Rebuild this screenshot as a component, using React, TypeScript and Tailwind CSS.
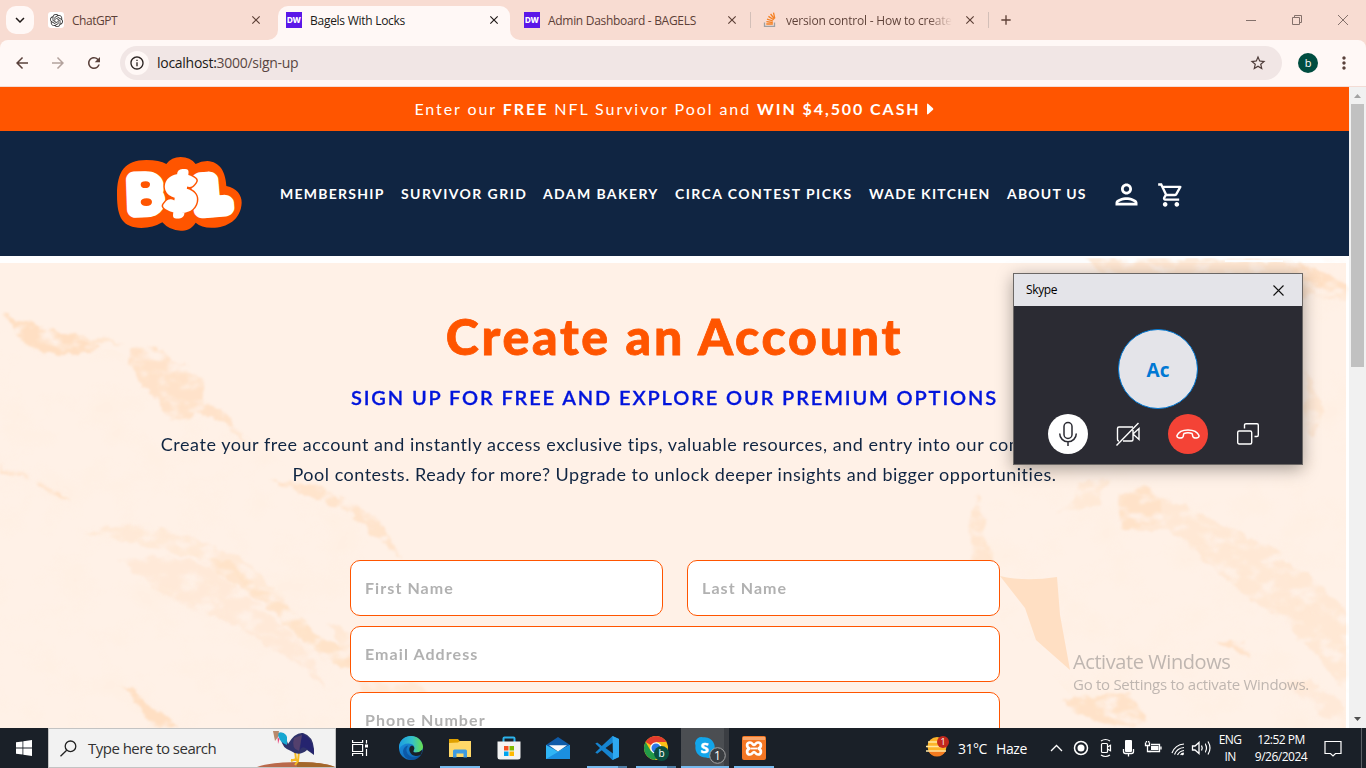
import React from "react";
import {
  MdOutlinePerson,
  MdOutlineShoppingCart,
  MdOutlineInfo,
  MdStarBorder,
  MdArrowBack,
  MdArrowForward,
  MdRefresh,
  MdMoreVert,
  MdClose,
  MdAdd,
  MdKeyboardArrowDown,
} from "react-icons/md";
import { SiOpenai } from "react-icons/si";

const UI = "font-['Open_Sans','Noto_Sans',sans-serif]";

function DwIcon() {
  return (
    <span className="flex h-4 w-4 shrink-0 items-center justify-center bg-[#5b17e8] font-['Inter',sans-serif] text-[8px] font-extrabold leading-none text-white">
      DW
    </span>
  );
}

function StackIcon() {
  return (
    <svg width="16" height="16" viewBox="0 0 16 16" className="shrink-0" fill="none">
      <path d="M2.5 10.5v3.8h10v-3.8" stroke="#9da0a3" strokeWidth="1.3" />
      <path d="M4.3 12h6.5M4.4 9.7l6.4.8M5 7.2l6 1.8M6.4 4.4l5.3 3.4M8.6 2l3.9 5M11.5.6l1.3 5.7" stroke="#f48024" strokeWidth="1.3" />
    </svg>
  );
}

function TabTitle({ children, cls }: { children: React.ReactNode; cls: string }) {
  return <span className={`ml-2 mt-px whitespace-nowrap text-[12px] leading-4 ${cls}`}>{children}</span>;
}

function TabStrip() {
  return (
    <div className={`flex h-10 shrink-0 items-start bg-[#f8dcd2] text-[#5d4037] ${UI}`}>
      <div className="ml-1.5 mt-1.5 flex h-7 w-7 items-center justify-center rounded-[10px] bg-[#fff8f6] text-[#201a18]">
        <MdKeyboardArrowDown size={18} />
      </div>
      <div className="flex h-10 w-[244px] items-center pl-[14px] pr-[15px]">
        <span className="flex h-4 w-4 items-center justify-center rounded-[3px] bg-white text-[#333]">
          <SiOpenai size={13} />
        </span>
        <TabTitle cls="tracking-[-0.450px]">ChatGPT</TabTitle>
        <MdClose size={14} className="ml-auto" />
      </div>
      <div className="relative mt-1.5 flex h-[34px] w-[232px] items-center rounded-t-[10px] bg-[#fff8f6] pb-[6px] pl-2 pr-[9px] text-[#201a18]">
        <svg className="absolute -left-[10px] bottom-0" width="10" height="10"><path d="M10 0v10H0A10 10 0 0 0 10 0" fill="#fff8f6" /></svg>
        <svg className="absolute -right-[10px] bottom-0" width="10" height="10"><path d="M0 0v10h10A10 10 0 0 1 0 0" fill="#fff8f6" /></svg>
        <DwIcon />
        <TabTitle cls="tracking-[-0.270px]">Bagels With Locks</TabTitle>
        <MdClose size={14} className="ml-auto" />
      </div>
      <div className="flex h-10 w-[240px] items-center pl-[14px] pr-[11px]">
        <DwIcon />
        <TabTitle cls="tracking-[-0.300px]">Admin Dashboard - BAGELS</TabTitle>
        <MdClose size={14} className="ml-auto" />
      </div>
      <div className="flex h-10 w-[238px] items-center">
        <span className="mr-[11px] h-4 w-px bg-[#d3bfb8]" />
        <StackIcon />
        <TabTitle cls="w-[166px] overflow-hidden bg-linear-to-r from-[#5d4037] from-85% to-[#f8dcd2] bg-clip-text text-transparent tracking-[-0.200px]">
          version control - How to create
        </TabTitle>
        <MdClose size={14} className="ml-auto mr-[11px]" />
      </div>
      <div className="flex h-10 items-center">
        <span className="mr-[9px] h-4 w-px bg-[#d3bfb8]" />
        <MdAdd size={16} />
      </div>
      <svg className="ml-auto" width="130" height="40" viewBox="0 0 130 40" fill="none" stroke="#84716b" strokeWidth="1">
        <path d="M10 20.500h10M56.500 17.500h7v7h-7zM58.500 17v-1.500h7v7h-2M102 15l10 10M112 15l-10 10" />
      </svg>
    </div>
  );
}

function Toolbar() {
  return (
    <div className="shrink-0 bg-[#f8dcd2]">
      <div className={`flex h-[46px] items-center rounded-t-[8px] bg-[#fff8f6] text-[#5a413b] ${UI}`}>
        <MdArrowBack size={18} className="ml-[13px]" />
        <MdArrowForward size={18} className="ml-[18px] text-[#b3a29d]" />
        <MdRefresh size={18} className="ml-[18px]" />
        <div className="ml-[17px] flex h-[34px] w-[1162px] items-center rounded-full bg-[#f1e6e5] pl-[5px]">
          <span className="flex h-6 w-6 items-center justify-center rounded-full bg-[#fff8f6] text-[#2b2321]">
            <MdOutlineInfo size={16} />
          </span>
          <span className="-mt-px ml-[8px] text-[14px] tracking-[-0.280px] text-[#5a4642]">
            <span className="text-[#201a18]">localhost:</span>3000/sign-up
          </span>
          <MdStarBorder size={18} className="ml-auto mr-[15px] text-[#4d3b38]" />
        </div>
        <span className="ml-4 flex h-5 w-5 items-center justify-center rounded-full bg-[#004d40] pb-px text-[11px] leading-none text-white">b</span>
        <MdMoreVert size={20} className="ml-[16px]" />
      </div>
      <div className="h-px bg-[#f3dcd5]" />
    </div>
  );
}

function Logo() {
  return (
    <svg width="126" height="75" viewBox="52 48 378 225" className="shrink-0" aria-label="B$L">
      <path
        d="M52 165C52 95 75 60 140 60Q180 60 200 72Q215 51 243 51Q272 51 288 72Q304 63 323 63C360 65 378 95 380 138C412 145 426 165 426 188C424 240 380 264 335 263Q305 263 288 248C275 268 260 272 243 272Q210 272 188 247Q160 264 125 264C70 262 52 235 52 165Z"
        fill="#ff5500"
      />
      <g fill="#fff" stroke="#fff" strokeLinejoin="round" fontFamily="Lato, sans-serif" fontWeight="900">
        <text x="96" y="207" fontSize="122" strokeWidth="50" textLength="80" lengthAdjust="spacingAndGlyphs" transform="rotate(-2 138 165)">B</text>
        <text x="298" y="207" fontSize="122" strokeWidth="50" textLength="76" lengthAdjust="spacingAndGlyphs" transform="rotate(-5 340 170)">L</text>
        <text x="197" y="210" fontSize="138" stroke="#ff5500" strokeWidth="26" textLength="90" lengthAdjust="spacingAndGlyphs">$</text>
        <text x="197" y="210" fontSize="138" strokeWidth="18" textLength="90" lengthAdjust="spacingAndGlyphs">$</text>
      </g>
      <path d="M123 134Q123 124 138 124Q152 125 151 134Q150 144 136 144Q124 144 123 134ZM123 186Q124 175 141 175Q157 176 157 186Q156 198 140 198Q124 198 123 186Z" fill="#ff5500" />
    </svg>
  );
}

const NAV: [string, string][] = [
  ["MEMBERSHIP", "w-[121px] tracking-[1.250px]"],
  ["SURVIVOR GRID", "w-[142px] tracking-[1.430px]"],
  ["ADAM BAKERY", "w-[132px] tracking-[1.400px]"],
  ["CIRCA CONTEST PICKS", "w-[194px] tracking-[1.440px]"],
  ["WADE KITCHEN", "w-[138px] tracking-[1.250px]"],
  ["ABOUT US", "w-[80px] tracking-[1.200px]"],
];

function SiteHeader() {
  return (
    <header className="flex h-[125px] shrink-0 items-center bg-[#102542] pl-[117px]">
      <Logo />
      <nav className="ml-[37px] flex text-[14px] font-bold text-white">
        {NAV.map(([label, cls]) => (
          <a key={label} className={`${cls} whitespace-nowrap`}>{label}</a>
        ))}
      </nav>
      <MdOutlinePerson size={33} className="ml-[23px] mt-[2px] text-white" />
      <MdOutlineShoppingCart size={28} className="ml-[14px] mt-[2px] text-white" />
    </header>
  );
}

function RockTexture() {
  return (
    <svg className="absolute inset-0" width="1349" height="472" viewBox="0 256 1349 472">
      <defs>
        <filter id="rough" x="0" y="0" width="100%" height="100%">
          <feTurbulence type="fractalNoise" baseFrequency="0.07" numOctaves="4" seed="4" result="n" />
          <feDisplacementMap in="SourceGraphic" in2="n" scale="12" xChannelSelector="R" yChannelSelector="G" result="d" />
          <feTurbulence type="fractalNoise" baseFrequency="0.05 0.08" numOctaves="3" seed="21" />
          <feColorMatrix values="0 0 0 0 1  0 0 0 0 1  0 0 0 0 1  4 0 0 0 -1.100" result="patch" />
          <feComposite in="d" in2="patch" operator="in" />
          <feGaussianBlur stdDeviation="0.8" />
        </filter>
        <filter id="mottle" x="0" y="0" width="100%" height="100%">
          <feTurbulence type="fractalNoise" baseFrequency="0.022 0.028" numOctaves="5" seed="9" />
          <feColorMatrix values="0 0 0 0 1  0 0 0 0 0.86  0 0 0 0 0.75  3 0 0 0 -1.350" />
          <feComposite in2="SourceGraphic" operator="in" />
        </filter>
      </defs>
      <rect x="0" y="256" width="1349" height="472" fill="#fff" />
      <rect x="0" y="263" width="1346" height="465" fill="#fff1e7" />
      <g filter="url(#mottle)" opacity="0.5">
        <path d="M0 330L65 345 115 350 190 385 240 430 300 475 350 500 395 560 400 640 350 728H0Z" />
        <path d="M1085 258H1346V728H1140L1075 700 1000 620 985 560 975 520 1000 470Z" />
      </g>
      <g filter="url(#rough)" fill="#ffdfc3">
        <path d="M3 314L40 328 75 338 102 346 82 352 60 356 35 352 18 335Z" />
        <path d="M66 337L95 337 125 344 90 343Z" opacity=".6" />
        <path d="M132 347L150 346 175 362 205 380 206 402 232 418 248 445 222 420 200 412 190 420 170 422 158 400 142 386 130 362Z" opacity=".8" />
        <path d="M0 466L25 474 50 486 70 502 45 490 20 477 0 472Z" opacity=".8" />
        <path d="M270 482L310 482 345 500 380 520 402 560 375 535 350 512 315 498Z" opacity=".75" />
        <path d="M85 532L130 525 190 536 245 560 290 608 318 635 350 655 350 672 318 655 265 600 215 562Z" opacity=".45" />
        <path d="M195 556L225 560 262 590 290 608 318 635 350 655 350 672 318 655 265 606 218 572Z" opacity=".7" />
        <path d="M120 560L170 556 215 570 265 610 310 650 325 690 300 665 232 622 180 605 145 580Z" opacity=".4" />
        <path d="M120 685L145 700 178 728H152L140 708Z" />
        <path d="M330 625L385 640 425 690 370 700 345 660Z" opacity=".5" />
        <path d="M1085 258L1200 258 1300 263 1330 282 1349 300 1300 296 1210 275 1110 282Z" opacity=".6" />
        <path d="M1282 262L1312 268 1349 285 1349 298 1310 285Z" opacity=".9" />
        <path d="M1080 480L1110 478 1098 505 1055 512 1075 500Z" opacity=".45" />
        <path d="M1120 500L1148 488 1175 503 1215 520 1270 548 1325 590 1349 615 1349 695 1315 655 1285 625 1215 568 1170 530 1123 530Z" opacity=".5" />
        <path d="M1118 498L1143 486 1160 500 1164 520 1125 530Z" opacity=".7" />
        <path d="M978 490L970 520 972 560 998 600 992 565 984 525Z" opacity=".6" />
        <path d="M1062 700L1085 698 1130 692 1148 722 1120 728 1085 718Z" opacity=".85" />
        <path d="M1215 640L1245 642 1248 656 1228 650Z" opacity=".8" />
        <path d="M1275 680L1310 680 1346 705 1346 728 1320 712Z" opacity=".4" />
        <path d="M1305 370L1325 410 1315 435 1305 425Z" opacity=".5" />
      </g>
      <path d="M1000 576Q1025 582 1057 577L1060 615 1070 670 1036 640 1025 608Z" fill="#ffdfc3" />
      <path d="M1225 261h58" stroke="#fff" strokeWidth="2" fill="none" />
      <rect x="1346" y="258" width="3" height="470" fill="#fff" opacity=".7" />
    </svg>
  );
}

function Field({ label }: { label: string }) {
  return (
    <input
      placeholder={label}
      className="h-14 w-full min-w-0 rounded-[10px] border border-[#ff5500] bg-white px-[14.500px] pb-[2px] text-[16px] font-bold tracking-[1.080px] placeholder:text-[#b1b1b1]"
    />
  );
}

function SignUp() {
  return (
    <main className="relative h-[472px] shrink-0 overflow-hidden">
      <RockTexture />
      <div className="relative flex flex-col items-center text-[#102542]">
        <h1 className="mt-[50px] text-[50px] font-black leading-[60px] tracking-[2.750px] text-[#ff5500] [-webkit-text-stroke:0.8px_#ff5500]">Create an Account</h1>
        <h2 className="mt-[16px] text-[20px] font-semibold leading-[30px] tracking-[1.880px] text-[#0014dc] [-webkit-text-stroke:0.3px_#0014dc]">
          SIGN UP FOR FREE AND EXPLORE OUR PREMIUM OPTIONS
        </h2>
        <p className="mt-[17px] whitespace-nowrap text-center text-[18px] leading-[30px] tracking-[0.500px]">
          <span className="tracking-[0.540px]">Create your free account and instantly access exclusive tips, valuable resources, and entry into our complimentary Survivor</span>
          <br />
          Pool contests. Ready for more? Upgrade to unlock deeper insights and bigger opportunities.
        </p>
        <form className="mt-[71px] grid w-[650px] grid-cols-2 gap-x-6 gap-y-[10px]">
          <Field label="First Name" />
          <Field label="Last Name" />
          <div className="col-span-2"><Field label="Email Address" /></div>
          <div className="col-span-2"><Field label="Phone Number" /></div>
        </form>
      </div>
    </main>
  );
}

function Scrollbar() {
  return (
    <div className="flex w-[17px] shrink-0 flex-col items-center bg-[#f1f1f1]">
      <svg width="17" height="17"><path d="M5 11h7L8.500 7z" fill="#a3a3a3" /></svg>
      <div className="h-[263px] w-[13px] bg-[#c1c1c1]" />
      <svg className="mt-auto" width="17" height="17"><path d="M5 6h7L8.500 10z" fill="#505050" /></svg>
    </div>
  );
}

function SkypeWindow() {
  return (
    <section className={`absolute left-[1013px] top-[273px] flex h-[192px] w-[290px] flex-col border border-[#6b6765] bg-[#2b2b33] shadow-[0_4px_16px_rgba(0,0,0,0.35)] ${UI}`}>
      <div className="flex h-8 items-center bg-[#e4e4e9] pl-3 pr-[18px] text-[12px] tracking-[-0.35px] text-black">
        Skype
        <svg className="ml-auto" width="11" height="11"><path d="M.5.5l10 10M10.500.5l-10 10" stroke="#111" strokeWidth="1.100" /></svg>
      </div>
      <div className="mx-auto mt-[23px] flex h-20 w-20 shrink-0 items-center justify-center rounded-full border border-[#0078d4] bg-[#e4e4e9] pt-[3px] text-[19px] font-bold text-[#0078d4]">Ac</div>
      <div className="mt-[5px] flex items-center gap-5 pl-[34px]">
        <span className="flex h-10 w-10 items-center justify-center rounded-full bg-white">
          <svg width="20" height="26" viewBox="0 0 20 26" fill="none" stroke="#2b2b33" strokeWidth="1.500">
            <rect x="6" y="1.500" width="8" height="16" rx="4" /><path d="M1.700 12.500a8.300 8.300 0 0 0 16.600 0M10 21v4" />
          </svg>
        </span>
        <span className="flex h-10 w-10 items-center justify-center">
          <svg width="26" height="26" viewBox="0 0 26 26" fill="none" stroke="#fff" strokeWidth="1.400">
            <path d="M18 6H4Q2.500 6 2.500 7.500V18Q2.500 20 4 20M8 20H16.500Q18 20 18 18.500V9M18 13L24 7.500V18.500L18 13M1.500 24.500L23.500 2" />
          </svg>
        </span>
        <span className="flex h-10 w-10 items-center justify-center rounded-full bg-[#f44336]">
          <svg width="26" height="14" viewBox="0 0 26 14" fill="none" stroke="#fff" strokeWidth="1.500" strokeLinejoin="round">
            <path d="M2 8.500C5 1 21 1 24 8.500C24.500 11 21 11.500 18.500 10.500C17 9.500 18 7.500 17 6.500Q13 5 9 6.500C8 7.500 9 9.500 7.500 10.500C5 11.500 1.500 11 2 8.500Z" />
          </svg>
        </span>
        <span className="flex h-10 w-10 items-center justify-center">
          <svg width="22" height="22" viewBox="0 0 22 22" fill="none" stroke="#fff" strokeWidth="1.400">
            <rect x=".7" y="8" width="14" height="13" rx="1.500" /><path d="M7.500 5.500V2Q7.500.7 9 .7H20Q21.300.7 21.300 2V12Q21.300 13.500 20 13.500H17.500" />
          </svg>
        </span>
      </div>
    </section>
  );
}

function SearchBox() {
  return (
    <div className="flex h-10 w-[288px] items-center overflow-hidden border border-[#c3c3c3] bg-[#f2f2f2] text-[15px] text-[#333]">
      <svg className="ml-[11px]" width="17" height="17" viewBox="0 0 17 17" fill="none" stroke="#222" strokeWidth="1.300"><circle cx="10.500" cy="6.300" r="5.300" /><path d="M6.700 10.200L.5 16.300" /></svg>
      <span className="ml-[11px] whitespace-nowrap tracking-[-0.520px]">Type here to search</span>
      <svg className="ml-auto" width="78" height="38" viewBox="0 0 78 38">
        <path d="M0 38Q14 33 42 33Q66 33 78 38Z" fill="#b9694b" />
        <path d="M40 33Q66 33 78 38H40Z" fill="#a3672b" />
        <path d="M38 22l1 8-5 2M42 22l-1 10-3 4M34 31h8" stroke="#f5b921" strokeWidth="2" fill="none" />
        <path d="M22 4Q28 3 29 9L31 15Q38 3 46 4Q56 7 57 20L57 26 50 21Q42 28 34 22Q25 19 24 10Z" fill="#30336b" />
        <path d="M45 5Q56 9 57 25L50 20Q45 16 43 21Z" fill="#25246f" />
        <path d="M37 9Q34 20 42 22L45 6Z" fill="#53406d" />
        <path d="M20 4Q28 2 30 8L30 16Q24 14 22 9Z" fill="#16a7d1" />
        <path d="M16 2L22 2 21 8 18 12Z" fill="#b98a6c" /><path d="M20.500 8l.5 7 1.500-5Z" fill="#e7477d" />
      </svg>
    </div>
  );
}

function TaskApp({ children, bar = "w-10", cls = "w-[49px]" }: { children: React.ReactNode; bar?: string; cls?: string }) {
  return (
    <div className={`flex h-10 flex-col items-center ${cls}`}>
      <div className="flex h-[38px] items-center pt-[2px]">{children}</div>
      <div className={`h-[2px] ${bar}`} />
    </div>
  );
}

const BAR = "w-10 bg-[#76b9ed]";
const MULTI = "w-10 bg-linear-to-r from-[#76b9ed] from-78% to-[#4f7ea6] to-78%";

function TaskApps() {
  return (
    <div className="flex">
      <TaskApp>
        <svg width="24" height="24" viewBox="0 0 24 24">
          <defs>
            <linearGradient id="eg" x1="0" x2="1"><stop stopColor="#1b9de2" /><stop offset=".55" stopColor="#35c1c9" /><stop offset="1" stopColor="#69e04b" /></linearGradient>
            <linearGradient id="eb" x1="0" y1="0" x2="1" y2="1"><stop stopColor="#1c96e8" /><stop offset="1" stopColor="#0c59a4" /></linearGradient>
          </defs>
          <circle cx="12" cy="12" r="12" fill="url(#eb)" />
          <path d="M0 10.500C1.500-3 22-4 24 10.500C24 15 20 17 16 16.500Q13.500 16 14.800 14.300Q17 8 9.500 7.500Q3 7.500 0 13Z" fill="url(#eg)" />
          <path d="M9 9.500Q5 16 11 20Q16 23 22 18.500Q19 24 12 24Q4 22 4 15Q5 10 9 9.500Z" fill="#0a4f9e" opacity=".75" />
          <path d="M14.800 14.300Q13.500 16 16 16.500Q20 17 23.300 13.800Q23 17 21.500 19Q13 22 10.500 15Q9.500 10.500 13 9.500Q16.500 11 14.800 14.300Z" fill="#1a2028" />
        </svg>
      </TaskApp>
      <TaskApp bar={BAR}>
        <svg width="22" height="19" viewBox="0 0 22 19"><path d="M0 0h9l2 2.500h11V6H0z" fill="#e0a100" /><path d="M0 4l9-.5 2-1.500h11v16H0z" fill="#ffd868" /><path d="M4 18.500V12q0-1.500 1.500-1.500h11Q18 10.500 18 12v6.500h-3.500v-4h-7v4z" fill="#3f9be0" /></svg>
      </TaskApp>
      <TaskApp>
        <svg width="24" height="24" viewBox="0 0 24 24"><path d="M6.500 6V2.500Q6.500 1.500 7.500 1.500h9q1 0 1 1V6" fill="none" stroke="#2cb3ec" strokeWidth="2" /><path d="M.5 5.500h23V21q0 2.500-2.500 2.500H3Q.5 23.500.5 21z" fill="#f3f3f3" /><path d="M7 10h4.500v4.500H7z" fill="#f25022" /><path d="M12.500 10H17v4.500h-4.500z" fill="#7fba00" /><path d="M7 15.500h4.500V20H7z" fill="#00a4ef" /><path d="M12.500 15.500H17V20h-4.500z" fill="#ffb900" /></svg>
      </TaskApp>
      <TaskApp>
        <svg width="24" height="22" viewBox="0 0 24 22"><path d="M0 8L12 0l12 8v5H0z" fill="#0f5ba8" /><path d="M0 8l12 6.500L24 8v14H0z" fill="#30b5f5" /><path d="M0 22L24 8v14z" fill="#1b8fe0" /><path d="M3 8.200h18L12 14.500z" fill="#f8fafc" /></svg>
      </TaskApp>
      <TaskApp bar={MULTI}>
        <svg width="24" height="24" viewBox="0 0 24 24"><path d="M17.500 0L24 3v18l-6.500 3L6.800 14.200 2.200 17.700.3 16.600 5 12 .3 7.600 2.200 6.500l4.600 3.400zM18 6.500L10.500 12l7.500 5.500z" fill="#1684d0" fillRule="evenodd" /><path d="M17.500 0L24 3v18l-6.500 3 .5-2z" fill="#2ea8f0" /></svg>
      </TaskApp>
      <TaskApp bar={MULTI}>
        <svg width="26" height="26" viewBox="-1 0 26 26">
          <circle cx="12" cy="13" r="12" fill="#fbc116" /><path d="M12 13L1.600 7A12 12 0 0 1 22.400 7H12z" fill="#e33b2e" /><path d="M1.600 7A12 12 0 0 0 11 25l5.500-9.500L12 13 6.800 16z" fill="#229a48" /><circle cx="12" cy="13" r="5.800" fill="#fff" /><circle cx="12" cy="13" r="4.500" fill="#2c78e6" />
          <circle cx="17.500" cy="18.500" r="7.500" fill="#0b4f40" /><text x="17.500" y="22" textAnchor="middle" fontSize="10" fill="#fff">b</text>
        </svg>
      </TaskApp>
      <TaskApp bar="w-full bg-[#76b9ed]" cls="ml-px w-[48px] bg-linear-to-r from-[#4b4e52] from-90% to-[#3b3e43] to-90%">
        <svg width="36" height="30" viewBox="-1 -1 36 30" className="ml-[11px] mt-[3px] shrink-0">
          <path d="M1 7A6.500 6.500 0 0 1 9 1.300 10 10 0 0 1 20.500 13 6.500 6.500 0 0 1 12 21.500 10 10 0 0 1 1.500 10Z" fill="#12a5ea" />
          <text x="10.700" y="16.800" textAnchor="middle" fontSize="15" fontWeight="700" fill="#fff" stroke="#fff" strokeWidth=".5">S</text>
          <circle cx="23.500" cy="19.500" r="7.800" fill="#3a3d41" stroke="#a3a3a3" /><text x="23.500" y="24" textAnchor="middle" fontSize="12" fill="#fff">1</text>
        </svg>
      </TaskApp>
      <TaskApp bar={BAR}>
        <svg width="24" height="24" viewBox="0 0 24 24"><rect width="24" height="24" rx="2" fill="#f37623" /><path d="M1 1h22v3H1z" fill="#f9a66b" /><path d="M8 6.500C4.500 6.500 4 11 7.500 12.500C4 14 4.500 18.500 8 18.500C10.500 18.500 10.500 16 12 16S13.500 18.500 16 18.500C19.500 18.500 20 14 16.500 12.500C20 11 19.500 6.500 16 6.500C13.500 6.500 13.500 9 12 9S10.500 6.500 8 6.500Z" fill="none" stroke="#fff" strokeWidth="2.700" strokeLinejoin="round" /><path d="M9 12.500h6" stroke="#fff" strokeWidth="1.800" /></svg>
      </TaskApp>
    </div>
  );
}

function Tray() {
  return (
    <div className="ml-auto flex h-10 items-center text-white">
      <svg width="26" height="24" viewBox="0 0 26 24">
        <circle cx="12" cy="10.500" r="9.500" fill="#fdb52a" /><path d="M3 14.500h18Q18 20.500 12 20.500T3 14.500Z" fill="#f47b20" /><path d="M3 6h13M1 10.500h19M1 15h20" stroke="#ffe6a0" strokeWidth="1.600" />
        <circle cx="18" cy="6" r="6" fill="#c4281c" /><text x="18" y="9.300" fontSize="9" textAnchor="middle" fill="#fff">1</text>
      </svg>
      <span className="ml-[7px] w-[38px] whitespace-nowrap text-[14px] tracking-[-0.500px]">31°C</span>
      <span className="w-[54px] whitespace-nowrap text-[14px] tracking-[-0.400px]">Haze</span>
      <svg width="155" height="24" viewBox="0 0 155 24" fill="none" stroke="#fff" strokeWidth="1.300">
        <path d="M1 15l5.500-5.500L12 15" />
        <circle cx="31" cy="12" r="6.500" strokeWidth="1.500" /><circle cx="31" cy="12" r="3.500" fill="#fff" stroke="none" />
        <path d="M51.500 8.500q0-1 1-1h4q1 0 1 1v7q0 1-1 1h-4q-1 0-1-1zM57.500 11l3-1.800v5.600l-3-1.800M51 5q4.500-3 9 0M51 19q4.500 3 9 0" strokeWidth="1.200" />
        <rect x="75" y="4" width="7" height="12" rx="1" fill="#fff" stroke="none" /><path d="M73.500 13v2.500q0 2 2 2h6q2 0 2-2V13M78.500 18v2.500" />
        <path d="M101 8.500h8.500v7h-10M111 10.500v3" /><path d="M101 10h7.500v4H101z" fill="#fff" stroke="none" /><path d="M95.500 6.500v3h4V6.500M97.500 9.500v6h3M96.500 6.500V5M98.700 6.500V5" />
        <path d="M122 17a14 14 0 0 1 12-9M124.500 18.500a11 11 0 0 1 9.500-7M127.500 19a8 8 0 0 1 6.500-4.500M130.500 19a5 5 0 0 1 3.500-2" strokeWidth="1.200" /><circle cx="132.500" cy="18" r="1.300" fill="#fff" stroke="none" />
        <path d="M142.500 10h2.500l4-3.500v11L145 14h-2.500zM151.500 9.500q1.500 2.500 0 5" />
      </svg>
      <svg width="8" height="24" viewBox="0 0 8 24" fill="none" stroke="#fff" strokeWidth="1.200"><path d="M0 7.500q3 4.500 0 9M3 5.500q4 6.500 0 13" /></svg>
      <div className="ml-[3px] flex w-7 flex-col items-center text-[12px] leading-[17px] tracking-[-0.600px]"><span>ENG</span><span>IN</span></div>
      <div className="ml-[5px] flex w-[64px] flex-col items-center whitespace-nowrap text-[12px] leading-[17px] tracking-[-0.500px]"><span>12:52 PM</span><span>9/26/2024</span></div>
      <svg className="ml-[11px]" width="18" height="18" viewBox="0 0 18 18" fill="none" stroke="#fff" strokeWidth="1.200"><path d="M1 2.500h16v12h-5.500L9 17l-2.500-2.500H1z" /></svg>
      <span className="ml-[19px] mr-[4px] h-10 w-px bg-[#5b6065]" />
    </div>
  );
}

function Taskbar() {
  return (
    <footer className={`flex h-10 shrink-0 items-center bg-[#1a2028] ${UI}`}>
      <svg className="ml-4 mr-4 shrink-0" width="16" height="16" viewBox="0 0 16 16" fill="#fff"><path d="M0 2.300L6.500 1.400v6.200H0zM7.300 1.300L16 0v7.600H7.300zM0 8.400h6.500v6.200L0 13.700zM7.300 8.400H16V16l-8.700-1.200z" /></svg>
      <SearchBox />
      <svg className="ml-4 mr-[18px] shrink-0" width="16" height="16" viewBox="0 0 16 16" fill="none" stroke="#fff" strokeWidth="1.200"><path d="M.6 0v2.500h10V0M.6 4.500h10v7H.6zM.6 16v-2.500h10V16M14.500 0v3.500M14.500 9v7" /><path d="M13 4.500h3v3h-3z" fill="#fff" stroke="none" /></svg>
      <TaskApps />
      <Tray />
    </footer>
  );
}

export default function App() {
  return (
    <div className="relative flex h-[768px] w-[1366px] flex-col overflow-hidden bg-white">
      <TabStrip />
      <Toolbar />
      <div className="flex h-[641px] shrink-0">
        <div className="flex w-[1349px] flex-col font-['Lato',sans-serif]">
          <div className="flex h-11 shrink-0 items-center justify-center whitespace-pre bg-[#ff5500] pr-px text-[16px] tracking-[1.930px] text-white">
            <span>Enter our <b>FREE</b> NFL Survivor Pool and <b>WIN $4,500 CASH</b></span>
            <svg className="ml-[5px]" width="8" height="12"><path d="M1 1.500Q1 0 2.300 1L7 5.200Q7.700 6 7 6.800L2.300 11Q1 12 1 10.500z" fill="#fff" /></svg>
          </div>
          <SiteHeader />
          <SignUp />
        </div>
        <Scrollbar />
      </div>
      <Taskbar />
      <SkypeWindow />
      <div className={`absolute left-[1073px] top-[649px] whitespace-nowrap text-[#9c9793]/65 ${UI}`}>
        <div className="text-[20px] leading-[26px] tracking-[-0.420px]">Activate Windows</div>
        <div className="-mt-px text-[15px] leading-[20px] tracking-[-0.280px]">Go to Settings to activate Windows.</div>
      </div>
    </div>
  );
}
